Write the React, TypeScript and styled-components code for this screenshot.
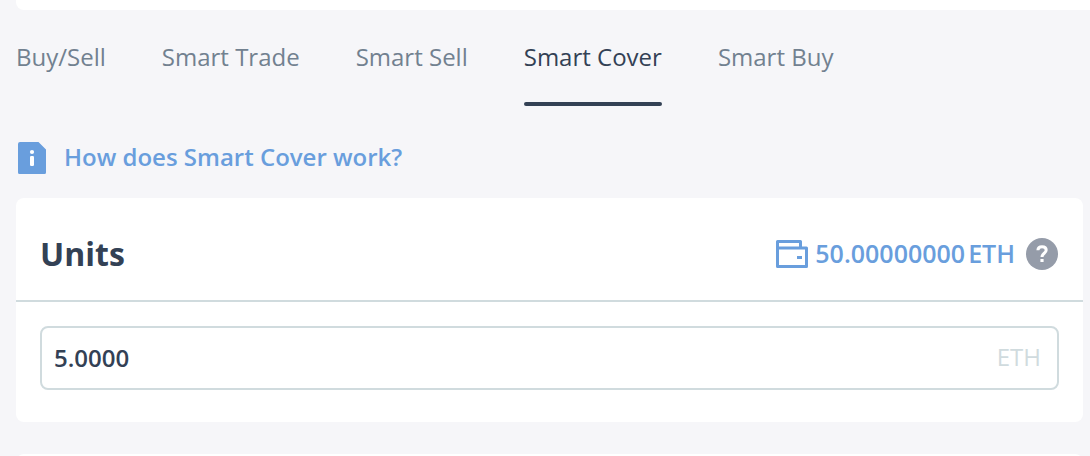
import React, { useState } from "react";
import styled, { createGlobalStyle } from "styled-components";

const colors = {
  page: "#f6f6f9",
  ink: "#334155",
  muted: "#728190",
  blue: "#699edd",
  line: "#d0dbde",
  grey: "#959ca9",
};

const GlobalStyle = createGlobalStyle`
  * { box-sizing: border-box; }
  body {
    margin: 0;
    background: ${colors.page};
    color: ${colors.ink};
    font-family: "Open Sans", sans-serif;
    font-size: 24px;
    line-height: 30px;
  }
`;

const Page = styled.main`
  display: flex;
  flex-direction: column;
  height: 100vh;
  padding-left: 16px;
  overflow: hidden;
`;

const PreviousPanel = styled.div`
  flex: none;
  height: 10px;
  border-radius: 0 0 0 8px;
  background: #fff;
`;

const Content = styled.div`
  display: flex;
  flex-direction: column;
  padding-right: 7px;
`;

const Tabs = styled.nav`
  display: flex;
  gap: 56px;
  padding-top: 32px;
`;

const Tab = styled.button<{ $active: boolean }>`
  display: flex;
  flex-direction: column;
  gap: 30px;
  padding: 0;
  border: 0;
  background: none;
  color: ${(p) => (p.$active ? colors.ink : colors.muted)};
  font: inherit;
  white-space: nowrap;
  cursor: pointer;

  &::after {
    content: "";
    width: 100%;
    height: 4px;
    border-radius: 2px;
    background: ${(p) => (p.$active ? colors.ink : "transparent")};
  }
`;

const HelpLink = styled.a`
  display: flex;
  align-items: flex-start;
  align-self: flex-start;
  gap: 18px;
  margin: 36px 0 24px;
  padding-left: 2px;
  color: ${colors.blue};
  font-weight: 600;
  text-decoration: none;
`;

const Panel = styled.section`
  border-radius: 8px;
  background: #fff;
`;

const PanelHeader = styled.header`
  display: flex;
  align-items: center;
  justify-content: space-between;
  height: 104px;
  padding: 10px 25px 0 24px;
  border-bottom: 2px solid ${colors.line};
`;

const Title = styled.h2`
  margin: 0;
  font-size: 32px;
  line-height: 40px;
  font-weight: 700;
`;

const Balance = styled.div`
  display: flex;
  align-items: center;
  color: ${colors.blue};
  font-size: 25px;
  font-weight: 600;
`;

const BalanceButton = styled.button`
  display: flex;
  align-items: center;
  gap: 7px;
  padding: 0;
  border: 0;
  background: none;
  color: inherit;
  font: inherit;
  cursor: pointer;
`;

const Amount = styled.span`
  display: flex;
  gap: 3px;
  padding-bottom: 2px;
`;

const HelpButton = styled.button`
  display: flex;
  margin-left: 11px;
  padding: 0;
  border: 0;
  background: none;
  cursor: pointer;
`;

const PanelBody = styled.div`
  padding: 24px 24px 32px;
`;

const Field = styled.label`
  display: flex;
  align-items: center;
  height: 64px;
  padding: 0 16px 0 12px;
  border: 2px solid ${colors.line};
  border-radius: 8px;
`;

const UnitsInput = styled.input`
  flex: 1;
  min-width: 0;
  padding: 0;
  border: 0;
  outline: 0;
  background: none;
  color: inherit;
  font: inherit;
  font-weight: 600;
`;

const Suffix = styled.span`
  padding-bottom: 2px;
  color: ${colors.line};
`;

const NextPanel = styled(Panel)`
  flex: none;
  height: 64px;
  margin-top: 32px;
`;

const InfoIcon = () => (
  <svg width="28" height="32" viewBox="0 0 28 32" aria-hidden="true">
    <path d="M2 0H20.500L28 7.500V30.500a1.500 1.500 0 0 1-1.500 1.500H1.500a1.500 1.500 0 0 1-1.500-1.500V2a2 2 0 0 1 2-2Z" fill={colors.blue} />
    <circle cx="14" cy="10" r="2.100" fill="#fff" />
    <rect x="12" y="14" width="4" height="10" rx="1.300" fill="#fff" />
  </svg>
);

const WalletIcon = () => (
  <svg width="32" height="28" viewBox="0 0 32 28" fill="none" stroke={colors.blue} strokeWidth="3" aria-hidden="true">
    <path d="M1.500 8V1.500H24.500V8" strokeLinejoin="round" />
    <path d="M1.500 8H30.500V26.500H1.500Z" strokeLinejoin="round" />
    <path d="M21 17.500H26" />
  </svg>
);

const QuestionIcon = () => (
  <svg width="32" height="32" viewBox="0 0 32 32" fill="none" aria-hidden="true">
    <circle cx="16" cy="16" r="16" fill={colors.grey} />
    <path d="M11.900 12.200C12 9.900 13.700 8.700 16 8.700c2.500 0 4.200 1.200 4.200 3.300 0 3.400-4.200 3.100-4.200 7" stroke="#fff" strokeWidth="3" />
    <path d="M14.400 20.900h3.200v3.100h-3.200z" fill="#fff" />
  </svg>
);

const tabs = ["Buy/Sell", "Smart Trade", "Smart Sell", "Smart Cover", "Smart Buy"];

export default function App() {
  const [active, setActive] = useState("Smart Cover");
  const [units, setUnits] = useState("5.0000");

  return (
    <>
      <GlobalStyle />
      <Page>
        <PreviousPanel />
        <Content>
          <Tabs>
            {tabs.map((tab) => (
              <Tab key={tab} type="button" $active={tab === active} onClick={() => setActive(tab)}>
                {tab}
              </Tab>
            ))}
          </Tabs>
          <HelpLink href="#help">
            <InfoIcon />
            How does Smart Cover work?
          </HelpLink>
          <Panel>
            <PanelHeader>
              <Title>Units</Title>
              <Balance>
                <BalanceButton type="button" onClick={() => setUnits("50.0000")}>
                  <WalletIcon />
                  <Amount>
                    <span>50.00000000</span>
                    <span>ETH</span>
                  </Amount>
                </BalanceButton>
                <HelpButton type="button" aria-label="About units">
                  <QuestionIcon />
                </HelpButton>
              </Balance>
            </PanelHeader>
            <PanelBody>
              <Field>
                <UnitsInput aria-label="Units" value={units} onChange={(e) => setUnits(e.target.value)} />
                <Suffix>ETH</Suffix>
              </Field>
            </PanelBody>
          </Panel>
          <NextPanel />
        </Content>
      </Page>
    </>
  );
}
